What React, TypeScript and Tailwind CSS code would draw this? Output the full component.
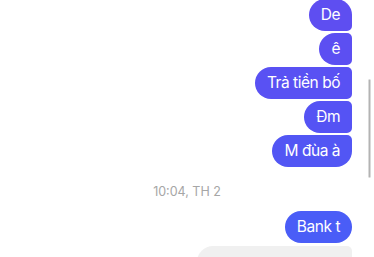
import React from "react";

type Msg = {
  text: string;
  color: string;
  corners: string;
};

// outgoing run of messages, first one is cut off at the top of the view
const group: Msg[] = [
  { text: "De", color: "bg-[#5e4ef1]", corners: "rounded-[16px] rounded-br-[5px]" },
  { text: "ê", color: "bg-[#5c4ff2]", corners: "rounded-[16px] rounded-r-[5px]" },
  { text: "Trả tiền bố", color: "bg-[#5951f3]", corners: "rounded-[16px] rounded-r-[5px]" },
  { text: "Đm", color: "bg-[#5553f4]", corners: "rounded-[16px] rounded-r-[5px]" },
  { text: "M đùa à", color: "bg-[#5256f4]", corners: "rounded-[16px] rounded-tr-[5px]" },
];

function Bubble({ msg }: { msg: Msg }) {
  return (
    <div
      className={`h-8 px-3 flex items-center text-white text-[15.5px] tracking-[-0.03em] leading-none ${msg.color} ${msg.corners}`}
    >
      {msg.text}
    </div>
  );
}

export default function App() {
  return (
    <div
      className="relative w-[374px] h-[257px] overflow-hidden bg-white"
      style={{ fontFamily: "Inter, 'Noto Sans', sans-serif" }}
    >
      <div className="flex flex-col items-end gap-[2px] pr-[22px] -mt-px">
        {group.map((m) => (
          <Bubble key={m.text} msg={m} />
        ))}
      </div>

      <div className="mt-[17px] mb-[11px] h-4 flex items-center justify-center text-[12.5px] text-[#a6a6a6]">
        10:04, TH 2
      </div>

      <div className="flex flex-col items-end pr-[22px]">
        <Bubble
          msg={{ text: "Bank t", color: "bg-[#4a5df7]", corners: "rounded-[16px]" }}
        />
        <div className="mt-[3px] w-[155px] h-8 bg-[#f0f0f0] rounded-[16px] rounded-tr-[5px]" />
      </div>

      {/* scroll indicator */}
      <div className="absolute left-[368px] top-[79px] w-[3px] h-[99px] rounded-full bg-[#b3b3b3] border border-[#d9d9d9]" />
    </div>
  );
}
